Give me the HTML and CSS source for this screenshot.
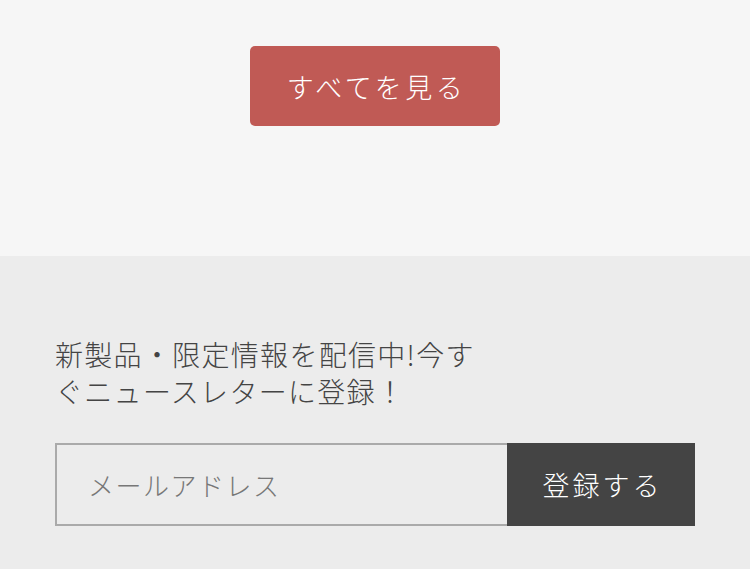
FILE: index.html
```html
<!DOCTYPE html>
<html lang="ja">
<head>
<meta charset="utf-8">
<link rel="stylesheet" href="styles.css">
</head>
<body>
<section class="top">
  <a class="more-btn" href="#">すべてを見る</a>
</section>
<section class="news">
  <p class="news-text">新製品・限定情報を配信中!今すぐニュースレターに登録！</p>
  <form class="news-form">
    <input class="news-input" type="text" placeholder="メールアドレス">
    <button class="news-btn" type="button">登録する</button>
  </form>
</section>
</body>
</html>
```
FILE: styles.css
```css
html, body {
  margin: 0;
  padding: 0;
}
body {
  width: 750px;
  height: 569px;
  overflow: hidden;
  font-family: "Noto Sans CJK JP", "Noto Sans", sans-serif;
  background: #ececec;
}
.top {
  background: #f6f6f6;
  height: 256px;
  display: flex;
  justify-content: center;
  align-items: flex-start;
  padding-top: 46px;
  box-sizing: border-box;
}
.more-btn {
  display: flex;
  align-items: center;
  justify-content: center;
  width: 250px;
  height: 80px;
  background: #c05a55;
  border-radius: 5px;
  color: #fff;
  text-decoration: none;
  font-size: 27px;
  letter-spacing: 3.5px;
  padding-left: 3px;
  box-sizing: border-box;
  font-weight: 300;
}
.news {
  padding: 80px 55px 0;
}
.news-text {
  margin: 0;
  width: 440px;
  font-size: 28px;
  line-height: 37px;
  letter-spacing: 1.3px;
  color: #444;
  font-weight: 300;
}
.news-form {
  display: flex;
  margin-top: 33px;
  height: 83px;
}
.news-input {
  width: 452px;
  height: 83px;
  box-sizing: border-box;
  border: 2px solid #aaa;
  border-right: none;
  background: #ececec;
  padding: 0 0 0 31px;
  font-family: inherit;
  font-size: 26px;
  letter-spacing: 1.5px;
  color: #444;
  outline: none;
  margin: 0;
}
.news-input::placeholder {
  color: #777;
  font-weight: 300;
}
.news-btn {
  width: 188px;
  height: 83px;
  border: none;
  margin: 0;
  background: #444;
  color: #fff;
  font-family: inherit;
  font-size: 27px;
  letter-spacing: 3px;
  padding: 0 0 0 3px;
  font-weight: 300;
}
```
